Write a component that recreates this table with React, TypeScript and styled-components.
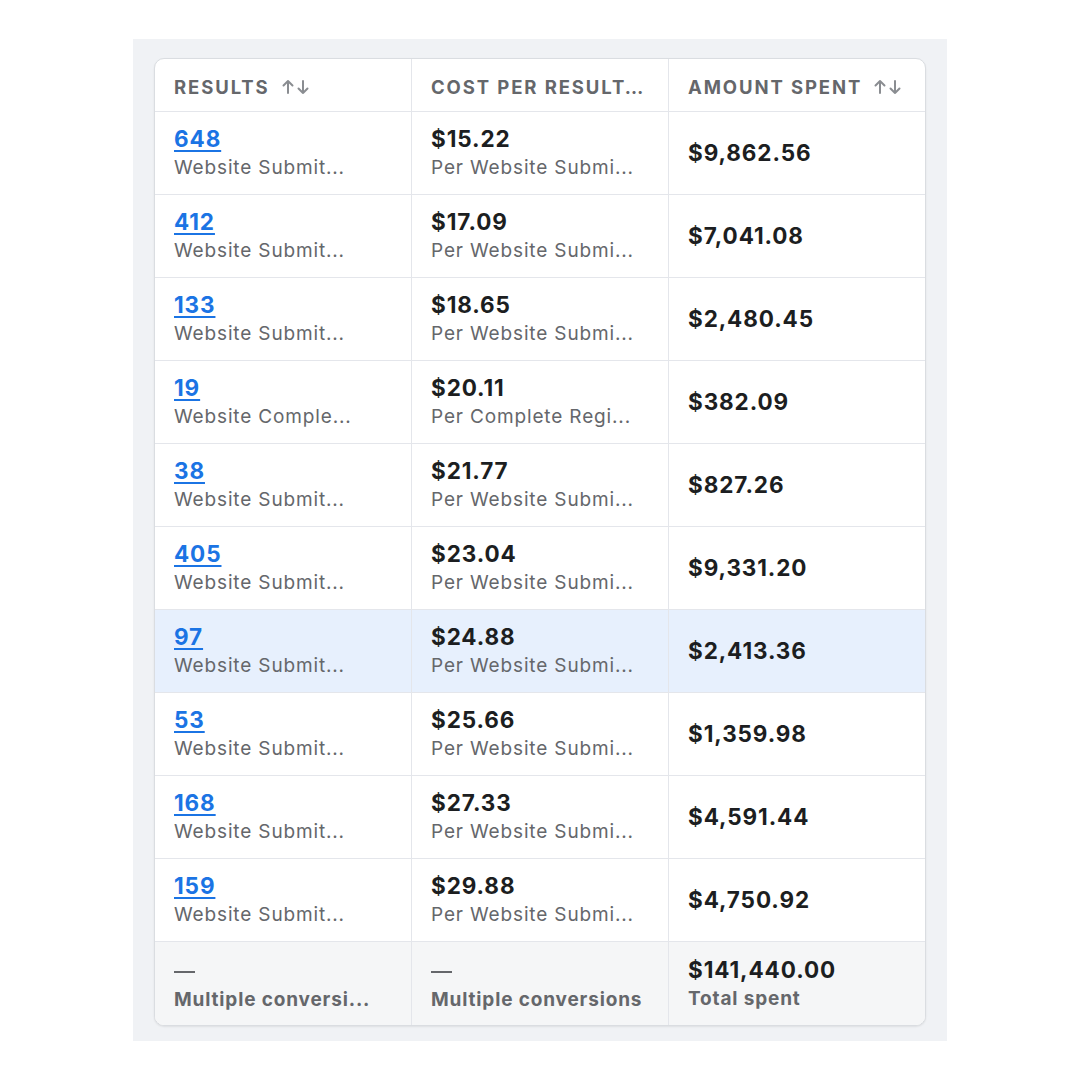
import React from 'react';
import styled, { createGlobalStyle, css } from 'styled-components';

const GlobalStyle = createGlobalStyle`
  html, body {
    margin: 0;
    padding: 0;
    background: #ffffff;
  }
  body {
    font-family: 'Inter', 'Liberation Sans', 'Noto Sans', sans-serif;
    -webkit-font-smoothing: antialiased;
  }
`;

const Page = styled.div`
  width: 1080px;
  height: 1080px;
  display: flex;
  justify-content: center;
  align-items: center;
`;

const Panel = styled.div`
  width: 814px;
  height: 1002px;
  box-sizing: border-box;
  padding: 19px 21px 16px;
  background: #f0f2f5;
`;

const Card = styled.div`
  display: grid;
  grid-template-columns: 257px 257px 1fr;
  background: #ffffff;
  border: 1px solid #dadde1;
  border-radius: 10px;
  overflow: hidden;
  box-shadow: 0 1px 2px rgba(0, 0, 0, 0.08);
`;

const cellBase = css<{ $last?: boolean }>`
  box-sizing: border-box;
  padding: 0 20px 0 19px;
  border-right: ${(p) => (p.$last ? 'none' : '1px solid #e4e6eb')};
  border-bottom: 1px solid #e4e6eb;
  min-width: 0;
`;

const HeadCell = styled.div<{ $last?: boolean }>`
  ${cellBase};
  height: 53px;
  display: flex;
  align-items: center;
  gap: 11px;
  padding-top: 3px;
  font-size: 18.5px;
  font-weight: 700;
  letter-spacing: 1.9px;
  color: #65676b;
  text-transform: uppercase;
  white-space: nowrap;
`;

const HeadLabel = styled.span`
  overflow: hidden;
  text-overflow: ellipsis;
`;

const SortIcon = styled.span`
  display: inline-flex;
  align-items: center;
  color: #8a8d91;
`;

const Cell = styled.div<{ $last?: boolean; $active?: boolean; $foot?: boolean }>`
  ${cellBase};
  height: 83px;
  display: flex;
  flex-direction: column;
  justify-content: center;
  background: ${(p) => (p.$active ? '#e7f0fd' : p.$foot ? '#f5f6f7' : '#ffffff')};
  border-bottom: ${(p) => (p.$foot ? 'none' : '1px solid #e4e6eb')};
`;

const Value = styled.div`
  font-size: 22.5px;
  line-height: 28px;
  font-weight: 700;
  letter-spacing: 0.9px;
  color: #1c1e21;
  white-space: nowrap;
`;

const LinkValue = styled.a`
  font-size: 22.5px;
  line-height: 28px;
  font-weight: 700;
  letter-spacing: 0.9px;
  color: #1b74e4;
  text-decoration: underline;
  text-decoration-thickness: 2px;
  text-underline-offset: 3px;
  align-self: flex-start;
`;

const Sub = styled.div<{ $bold?: boolean }>`
  margin-top: 2px;
  font-size: 19px;
  line-height: 26px;
  font-weight: ${(p) => (p.$bold ? 700 : 400)};
  letter-spacing: 0.85px;
  color: #65676b;
  white-space: nowrap;
  overflow: hidden;
  text-overflow: ellipsis;
`;

const Dash = styled.div`
  width: 21px;
  height: 2px;
  background: #65676b;
  margin: 16px 0 12px;
`;

function Arrows() {
  return (
    <SortIcon>
      <svg width="30" height="18" viewBox="0 0 30 18" fill="none" stroke="currentColor" strokeWidth="2" strokeLinecap="round" strokeLinejoin="round">
        <path d="M7 15V3M2.5 7.5L7 3l4.5 4.5" />
        <path d="M22 3v12M17.5 10.5L22 15l4.5-4.5" />
      </svg>
    </SortIcon>
  );
}

const rows = [
  { n: '648', type: 'Website Submit...', cost: '$15.22', per: 'Per Website Submi...', spent: '$9,862.56' },
  { n: '412', type: 'Website Submit...', cost: '$17.09', per: 'Per Website Submi...', spent: '$7,041.08' },
  { n: '133', type: 'Website Submit...', cost: '$18.65', per: 'Per Website Submi...', spent: '$2,480.45' },
  { n: '19', type: 'Website Comple...', cost: '$20.11', per: 'Per Complete Regi...', spent: '$382.09' },
  { n: '38', type: 'Website Submit...', cost: '$21.77', per: 'Per Website Submi...', spent: '$827.26' },
  { n: '405', type: 'Website Submit...', cost: '$23.04', per: 'Per Website Submi...', spent: '$9,331.20' },
  { n: '97', type: 'Website Submit...', cost: '$24.88', per: 'Per Website Submi...', spent: '$2,413.36', active: true },
  { n: '53', type: 'Website Submit...', cost: '$25.66', per: 'Per Website Submi...', spent: '$1,359.98' },
  { n: '168', type: 'Website Submit...', cost: '$27.33', per: 'Per Website Submi...', spent: '$4,591.44' },
  { n: '159', type: 'Website Submit...', cost: '$29.88', per: 'Per Website Submi...', spent: '$4,750.92' },
];

function App() {
  return (
    <Page>
      <GlobalStyle />
      <Panel>
        <Card>
          <HeadCell>
            <HeadLabel>Results</HeadLabel>
            <Arrows />
          </HeadCell>
          <HeadCell>
            <HeadLabel>Cost per result…</HeadLabel>
          </HeadCell>
          <HeadCell $last>
            <HeadLabel>Amount spent</HeadLabel>
            <Arrows />
          </HeadCell>

          {rows.map((row) => (
            <React.Fragment key={row.n}>
              <Cell $active={row.active}>
                <LinkValue href="#">{row.n}</LinkValue>
                <Sub>{row.type}</Sub>
              </Cell>
              <Cell $active={row.active}>
                <Value>{row.cost}</Value>
                <Sub>{row.per}</Sub>
              </Cell>
              <Cell $active={row.active} $last>
                <Value>{row.spent}</Value>
              </Cell>
            </React.Fragment>
          ))}

          <Cell $foot>
            <Dash />
            <Sub $bold>Multiple conversi...</Sub>
          </Cell>
          <Cell $foot>
            <Dash />
            <Sub $bold>Multiple conversions</Sub>
          </Cell>
          <Cell $foot $last>
            <Value>$141,440.00</Value>
            <Sub $bold>Total spent</Sub>
          </Cell>
        </Card>
      </Panel>
    </Page>
  );
}

export default App;
